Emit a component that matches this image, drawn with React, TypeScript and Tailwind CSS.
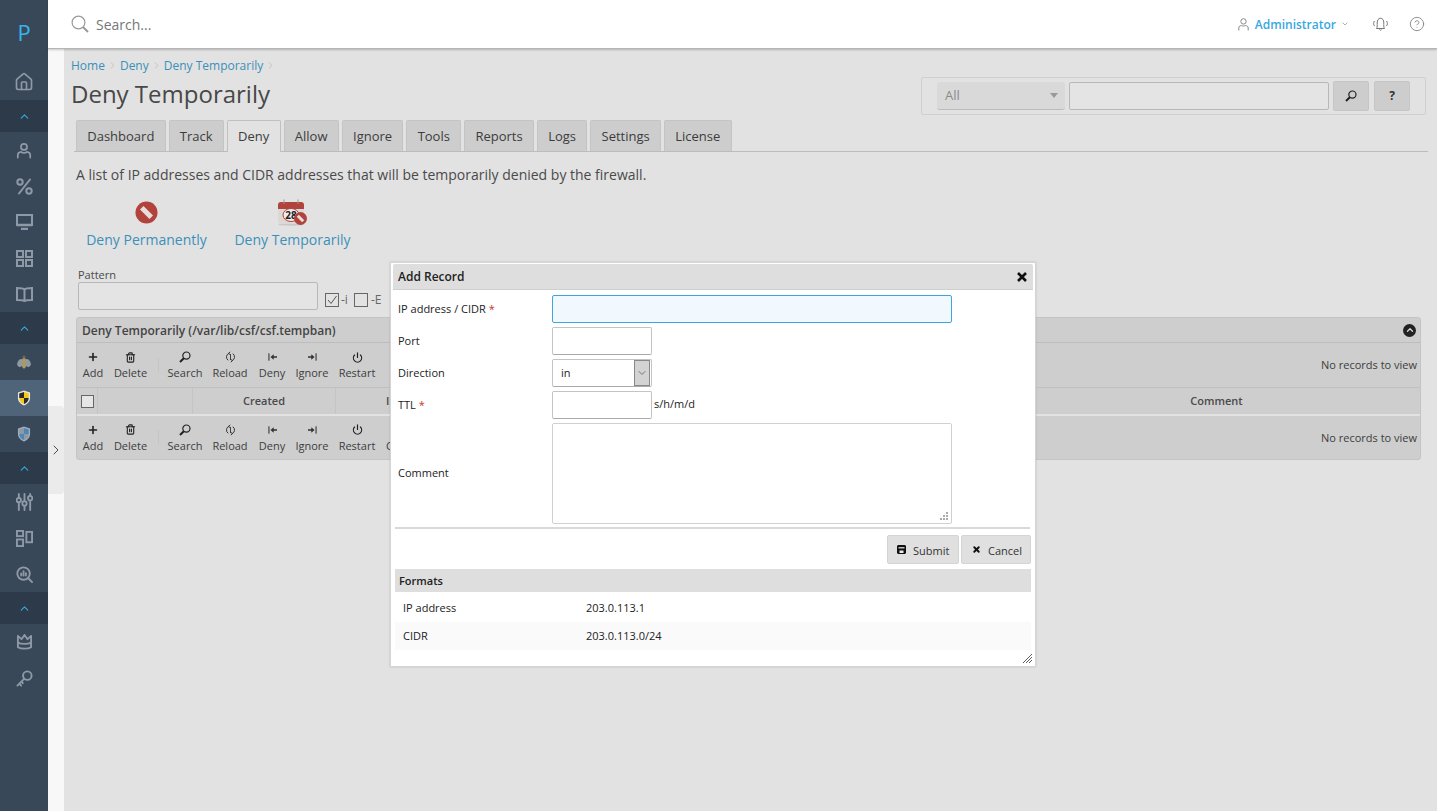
import React from "react";
import { ChevronUp, ChevronDown, ChevronRight, Home, Power, Plus, Trash2, X, HelpCircle } from "lucide-react";

const S = { stroke: "#8e99a6", fill: "none", strokeWidth: 2, strokeLinecap: "round" as const, strokeLinejoin: "round" as const };

function NavIcon({ children }: { children: React.ReactNode }) {
  return <div className="h-9 flex items-center justify-center">{children}</div>;
}
function Collapse() {
  return (
    <div className="h-8 bg-[#2d3a4a] flex items-center justify-center">
      <ChevronUp size={13} color="#36a9d8" strokeWidth={2} />
    </div>
  );
}
function Shield({ a, b, c }: { a: string; b: string; c: string }) {
  return (
    <svg width="14" height="16" viewBox="0 0 15 17">
      <path d="M7.5 0.5 L14 2.5 V8.5 C14 12.5 11 15 7.5 16.5 C4 15 1 12.5 1 8.5 V2.5Z" fill={c} />
      <path d="M7.5 2 L12.6 3.6 V8.5 H7.5Z" fill={a} />
      <path d="M7.5 2 L2.4 3.6 V8.5 H7.5Z" fill={b} />
      <path d="M7.5 15 C10 14 12.4 12 12.6 8.5 H7.5Z" fill={b} />
      <path d="M7.5 15 C5 14 2.6 12 2.4 8.5 H7.5Z" fill={a} />
    </svg>
  );
}

function Sidebar() {
  const c = "#8e99a6";
  return (
    <aside className="w-12 shrink-0 bg-[#394859] flex flex-col">
      <div className="h-16 flex items-center justify-center text-[22px] text-[#36b4ee] font-normal">P</div>
      <NavIcon><Home size={20} color={c} strokeWidth={2} /></NavIcon>
      <Collapse />
      <NavIcon>
        <svg width="16" height="17" viewBox="0 0 18 18" {...S}><circle cx="9" cy="5" r="3.4" /><path d="M2 17 V14.5 C2 12 4 10.8 6 10.6 C7 12 11 12 12 10.6 C14 10.8 16 12 16 14.5 V17" /></svg>
      </NavIcon>
      <NavIcon>
        <svg width="17" height="17" viewBox="0 0 17 17" {...S}><path d="M14 1.5L3 15.5" /><circle cx="4" cy="4" r="2.7" /><circle cx="13" cy="13" r="2.7" /></svg>
      </NavIcon>
      <NavIcon>
        <svg width="17" height="16" viewBox="0 0 17 16" {...S} strokeLinecap="butt" strokeLinejoin="miter"><rect x="1" y="1" width="15" height="10" /><path d="M1 11H16M5 15H12" strokeWidth="2.4" /></svg>
      </NavIcon>
      <NavIcon>
        <svg width="17" height="17" viewBox="0 0 17 17" {...S} strokeLinecap="butt" strokeLinejoin="miter"><rect x="1" y="1" width="6" height="6" /><rect x="10" y="1" width="6" height="6" /><rect x="1" y="10" width="6" height="6" /><rect x="10" y="10" width="6" height="6" /></svg>
      </NavIcon>
      <NavIcon>
        <svg width="17" height="15" viewBox="0 0 17 15" {...S} strokeLinecap="butt" strokeLinejoin="miter"><path d="M8.5 2.5C7 1 3 1 1 1V13C3 13 7 13 8.5 14.2C10 13 14 13 16 13V1C14 1 10 1 8.5 2.5ZM8.5 2.5V14" /></svg>
      </NavIcon>
      <Collapse />
      <NavIcon>
        <svg width="14" height="14" viewBox="0 0 14 14"><ellipse cx="3.5" cy="8" rx="3" ry="4" fill="#8e99a6" transform="rotate(25 3.5 8)" /><ellipse cx="10.5" cy="8" rx="3" ry="4" fill="#8e99a6" transform="rotate(-25 10.5 8)" /><ellipse cx="7" cy="8" rx="2.5" ry="5.5" fill="#a69a6a" /><circle cx="7" cy="2" r="1.6" fill="#6f6a55" /></svg>
      </NavIcon>
      <div className="h-9 bg-[#4f6478] flex items-center justify-center"><Shield a="#f6c90e" b="#2a2a2a" c="#e6e6e6" /></div>
      <NavIcon><Shield a="#4f86b8" b="#8d99a5" c="#a3adb8" /></NavIcon>
      <Collapse />
      <NavIcon>
        <svg width="17" height="18" viewBox="0 0 18 19" {...S}><path d="M3 1V5M3 10V18M9 1V8M9 14V18M15 1V3M15 9V18" /><circle cx="3" cy="7.5" r="2.3" /><circle cx="9" cy="11" r="2.3" /><circle cx="15" cy="5.5" r="2.3" /></svg>
      </NavIcon>
      <NavIcon>
        <svg width="17" height="17" viewBox="0 0 18 18" {...S} strokeLinecap="butt" strokeLinejoin="miter"><rect x="1" y="1" width="6.5" height="5.5" /><rect x="1" y="10" width="6.5" height="7" /><rect x="11" y="2" width="6" height="11" /></svg>
      </NavIcon>
      <NavIcon>
        <svg width="17" height="17" viewBox="0 0 18 18" {...S}><circle cx="8" cy="8" r="6.6" /><path d="M13 13L17 17M5.5 10V8M8 10V5.5M10.5 10V7.5" /></svg>
      </NavIcon>
      <Collapse />
      <NavIcon>
        <svg width="17" height="16" viewBox="0 0 18 17" {...S}><path d="M2 10 V2 L5.8 5.5 L9 1 L12.2 5.5 L16 2 V10" /><path d="M2 9 C5 11 13 11 16 9 V14 C13 16 5 16 2 14Z" /></svg>
      </NavIcon>
      <NavIcon>
        <svg width="17" height="17" viewBox="0 0 18 18" {...S}><circle cx="12" cy="6" r="4.5" /><path d="M8.8 9.2L1.5 16.5M3.5 14.5L5.5 16.5M5.7 12.3L7.3 13.9" /></svg>
      </NavIcon>
    </aside>
  );
}

function TopBar() {
  return (
    <header className="h-[49px] shrink-0 bg-white border-b border-b-[#b5b5b5] shadow-[0_1px_2px_rgba(0,0,0,0.2)] flex items-center pl-[23px] pr-[12px] z-10">
      <svg width="18" height="18" viewBox="0 0 18 18" fill="none" stroke="#9a9a9a" strokeWidth="1.2"><circle cx="7.5" cy="7.5" r="6.4" /><path d="M12 12L17 17" strokeWidth="2" /></svg>
      <span className="ml-[7px] text-[14px] text-[#777]">Search...</span>
      <div className="ml-auto flex items-center">
        <svg width="11" height="13" viewBox="0 0 11 13" fill="none" stroke="#888" strokeWidth="1"><circle cx="5.5" cy="3.4" r="2.7" /><path d="M0.8 12.5V10C0.8 8.4 2 7.6 3.4 7.5C4.2 8.2 6.8 8.2 7.6 7.5C9 7.6 10.2 8.4 10.2 10V12.5" /></svg>
        <span className="ml-[6px] mt-[1px] text-[12px] font-semibold text-[#36a9df]">Administrator</span>
        <ChevronDown size={8} color="#888" strokeWidth={2} className="ml-[5px]" />
        <svg className="ml-[23px]" width="17" height="15" viewBox="0 0 17 15" fill="none" stroke="#777" strokeWidth="1"><path d="M4.5 11.5C5.5 10 5.2 8 5.2 6C5.2 3 6.5 1.2 8.5 1.2C10.5 1.2 11.8 3 11.8 6C11.8 8 11.5 10 12.5 11.5Z" /><path d="M7.5 12.5C8 13.5 9 13.5 9.5 12.5M2.5 4C1.3 5.5 1.3 7.5 2.5 9M14.5 4C15.7 5.5 15.7 7.5 14.5 9" /></svg>
        <HelpCircle className="ml-[20px]" size={16} color="#777" strokeWidth={1.2} />
      </div>
    </header>
  );
}

const tabs = ["Dashboard", "Track", "Deny", "Allow", "Ignore", "Tools", "Reports", "Logs", "Settings", "License"];

function ReloadIcon() {
  return (
    <svg width="11" height="12" viewBox="0 0 11 12" fill="none" stroke="#333" strokeWidth="1"><path d="M4 2.3A4 4 0 0 0 3.2 9.3M7 9.7A4 4 0 0 0 7.8 2.7" /><path d="M5.5 3V9" strokeWidth="0.9" /><path d="M5.2 0.8L3.6 2.4L5.2 3.6M5.8 11.2L7.4 9.6L5.8 8.4" /></svg>
  );
}
function Bar({ dir }: { dir: "l" | "r" }) {
  return dir === "l" ? (
    <svg width="9" height="8" viewBox="0 0 11 9" fill="#333"><rect x="0.5" y="0" width="1.3" height="9" /><path d="M3 4.5L7 1V3.7H11V5.3H7V8Z" /></svg>
  ) : (
    <svg width="9" height="8" viewBox="0 0 11 9" fill="#333"><rect x="9.2" y="0" width="1.3" height="9" /><path d="M8 4.5L4 1V3.7H0V5.3H4V8Z" /></svg>
  );
}
function FlippedSearch() {
  return (
    <svg width="12" height="12" viewBox="0 0 12 12" fill="none" stroke="#222">
      <circle cx="7.4" cy="4.6" r="3.6" strokeWidth="1.2" />
      <path d="M4.8 7.2L1 11" strokeWidth="2" />
    </svg>
  );
}

function ToolBtn({ icon, label, w }: { icon: React.ReactNode; label: string; w: string }) {
  return (
    <div className={`${w} flex flex-col items-center shrink-0`}>
      <div className="h-4 flex items-center justify-center">{icon}</div>
      <span className="text-[11px] leading-[15px] text-[#3d3d3d] whitespace-nowrap">{label}</span>
    </div>
  );
}

function Toolbar({ extra, h }: { extra?: boolean; h: string }) {
  return (
    <div className={`${h} flex items-center relative pl-[1px] pb-[1px]`}>
      <ToolBtn w="w-[30px]" label="Add" icon={<Plus size={12} color="#222" strokeWidth={3.2} />} />
      <ToolBtn w="w-[43px] ml-[1px]" label="Delete" icon={<Trash2 size={11} color="#222" strokeWidth={2.4} />} />
      <div className="w-px h-[14px] bg-[#c4c4c4] ml-[6px] mr-[3px]" />
      <ToolBtn w="w-[46px]" label="Search" icon={<FlippedSearch />} />
      <ToolBtn w="w-[44px]" label="Reload" icon={<ReloadIcon />} />
      <ToolBtn w="w-[38px] ml-[1px]" label="Deny" icon={<Bar dir="l" />} />
      <ToolBtn w="w-[44px] ml-[-1px]" label="Ignore" icon={<Bar dir="r" />} />
      <ToolBtn w="w-[46px]" label="Restart" icon={<Power size={11} color="#222" strokeWidth={2.6} />} />
      {extra && <span className="ml-[6px] mt-[16px] text-[11px] leading-[15px] text-[#3d3d3d]">Clear</span>}
      <span className="ml-auto mr-[3px] mt-[2px] text-[11px] text-[#3d3d3d]">No records to view</span>
    </div>
  );
}

function Grid() {
  return (
    <section className="ml-[12px] mr-[16px] mt-[7px] bg-[#cecece] border border-[#c4c4c4] rounded-[3px]">
      <div className="h-[25px] flex items-center pl-[5px] pr-[4px] border-b border-b-[#bdbdbd] text-[12px] font-semibold text-[#444]">
        <span className="mt-[1px]">Deny Temporarily (/var/lib/csf/csf.tempban)</span>
        <span className="ml-auto w-[13px] h-[13px] rounded-full bg-[#222] flex items-center justify-center">
          <ChevronUp size={10} color="#ddd" strokeWidth={3} />
        </span>
      </div>
      <Toolbar h="h-[44px]" />
      <div className="h-[29px] flex border-t border-t-[#c0c0c0] border-b-2 border-b-[#e2e2e2] text-[11px] font-semibold text-[#4a4a4a]">
        <div className="w-[21px] flex items-center justify-center border-r border-r-[#c4c4c4]">
          <span className="w-[13px] h-[13px] border border-[#666] bg-[#e6e6e6]" />
        </div>
        <div className="w-[95px] border-r border-r-[#c4c4c4]" />
        <div className="w-[143px] flex items-center justify-center border-r border-r-[#c4c4c4]">Created</div>
        <div className="w-[168px] flex items-center pl-[50px] border-r border-r-[#c4c4c4]">IP</div>
        <div className="flex-1 border-r border-r-[#c4c4c4]" />
        <div className="w-[407px] flex items-center justify-center">Comment</div>
      </div>
      <Toolbar extra h="h-[43px]" />
    </section>
  );
}

function NoEntry({ size }: { size: number }) {
  return (
    <svg width={size} height={size} viewBox="0 0 24 24">
      <circle cx="12" cy="12" r="11.5" fill="#b2423c" />
      <rect x="5" y="9.4" width="14" height="5.2" fill="#e6dedb" transform="rotate(45 12 12)" />
    </svg>
  );
}

function CalendarDeny() {
  return (
    <svg width="31" height="27" viewBox="0 0 31 27">
      <ellipse cx="14" cy="25.5" rx="13" ry="1.2" fill="#c8c8c8" />
      <rect x="1" y="3" width="26" height="22" rx="3" fill="#dcd8d6" />
      <path d="M1 10V6a3 3 0 0 1 3-3H24a3 3 0 0 1 3 3V10Z" fill="#b2423c" />
      <path d="M7 0.5V5M21 0.5V5" stroke="#999" strokeWidth="1" />
      <ellipse cx="14" cy="16" rx="8" ry="6.5" fill="#eee" stroke="#b2423c" strokeWidth="1" />
      <text x="14" y="19.5" textAnchor="middle" fontSize="10" fontWeight="700" fill="#222" fontFamily="'Open Sans',sans-serif">28</text>
      <circle cx="23.5" cy="19.5" r="6.5" fill="#b2423c" />
      <rect x="19.7" y="18" width="7.6" height="3" fill="#e6dedb" transform="rotate(45 23.5 19.5)" />
    </svg>
  );
}

function Page() {
  return (
    <main className="flex-1 bg-[#e2e2e2] relative">
      <div className="flex items-start justify-between pl-[7px] pr-[11px]">
        <div>
          <div className="mt-[8px] flex items-center text-[12px] leading-[17px] text-[#3b90b9]">
            <span>Home</span>
            <ChevronRight size={11} color="#b5b5b5" strokeWidth={1.5} className="mx-[2px]" />
            <span>Deny</span>
            <ChevronRight size={11} color="#b5b5b5" strokeWidth={1.5} className="mx-[2px]" />
            <span>Deny Temporarily</span>
            <ChevronRight size={11} color="#b5b5b5" strokeWidth={1.5} className="mx-[2px]" />
          </div>
          <h1 className="mt-[3px] text-[24px] leading-[34px] text-[#484848]">Deny Temporarily</h1>
        </div>
        <div className="mt-[28px] w-[505px] h-[38px] border border-[#d0d0d0] rounded-[2px] flex items-center pl-[15px]">
          <div className="w-[128px] h-[28px] bg-[#d9d9d9] rounded-[3px] border-b border-b-[#bbb] flex items-center justify-between pl-[8px] pr-[7px] text-[13px] text-[#8a8a8a]">
            All
            <span className="w-0 h-0 border-x-[4px] border-x-transparent border-t-[5px] border-t-[#999]" />
          </div>
          <div className="ml-[4px] w-[260px] h-[28px] bg-[#e4e4e4] border border-[#b8b8b8] rounded-[2px]" />
          <div className="ml-[4px] w-[36px] h-[30px] bg-[#cdcdcd] border border-[#c6c6c6] rounded-[2px] flex items-center justify-center"><FlippedSearch /></div>
          <div className="ml-[5px] w-[36px] h-[30px] bg-[#cdcdcd] border border-[#c6c6c6] rounded-[2px] flex items-center justify-center text-[12px] font-bold text-[#333]">?</div>
        </div>
      </div>
      <nav className="mt-[5px] ml-[10px] mr-[9px] h-[32px] flex gap-[3px] pl-[2px] border-b border-b-[#bcbcbc]">
        {tabs.map((t) => (
          <div
            key={t}
            className={
              t === "Deny"
                ? "h-[32px] px-[10.25px] pt-[1px] flex items-center text-[13px] text-[#3c3c3c] bg-[#e2e2e2] border border-[#c0c0c0] border-b-0 rounded-t-[2px] z-10"
                : "h-[31px] px-[10.25px] pt-[2px] flex items-center text-[13px] text-[#3c3c3c] bg-[#cdcdcd] border border-[#c4c4c4] border-b-0 rounded-t-[2px]"
            }
          >
            {t}
          </div>
        ))}
      </nav>
      <p className="mt-[13px] ml-[12px] text-[14px] leading-[19px] text-[#4a4a4a]">A list of IP addresses and CIDR addresses that will be temporarily denied by the firewall.</p>
      <div className="mt-[15px] ml-[22px] flex gap-[27px]">
        <div className="flex flex-col items-center w-[121px]">
          <div className="h-[27px] flex items-center justify-center"><NoEntry size={23} /></div>
          <span className="mt-[4px] text-[14px] leading-[19px] text-[#3b90b9] whitespace-nowrap">Deny Permanently</span>
        </div>
        <div className="flex flex-col items-center w-[117px]">
          <div className="h-[27px] flex items-center justify-center"><CalendarDeny /></div>
          <span className="mt-[4px] text-[14px] leading-[19px] text-[#3b90b9] whitespace-nowrap">Deny Temporarily</span>
        </div>
      </div>
      <div className="mt-[19px] ml-[14px] flex items-end">
        <div>
          <div className="text-[11px] leading-[14px] text-[#4a4a4a]">Pattern</div>
          <div className="w-[240px] h-[28px] bg-[#e4e4e4] border border-[#b8b8b8] rounded-[2px]" />
        </div>
        <div className="ml-[7px] mb-[1px] flex items-center text-[12px] text-[#666]">
          <span className="w-[14px] h-[14px] border border-[#666] flex items-center justify-center">
            <svg width="10" height="10" viewBox="0 0 10 10" fill="none" stroke="#555" strokeWidth="1"><path d="M1 5L4 8.5L9.5 1" /></svg>
          </span>
          <span className="ml-[2px]">-i</span>
          <span className="ml-[6px] w-[14px] h-[14px] border border-[#666]" />
          <span className="ml-[3px]">-E</span>
        </div>
      </div>
      <Grid />
      <Modal />
    </main>
  );
}

function Field({ label, req, children }: { label: string; req?: boolean; children: React.ReactNode }) {
  return (
    <div className="flex items-center mb-[4px]">
      <div className="w-[159px] pl-[5px] text-[11px] text-[#222]">
        {label}
        {req && <span className="text-[#c0392b]"> *</span>}
      </div>
      {children}
    </div>
  );
}

const inputCls = "h-[28px] bg-white border border-[#c4c4c4] border-b-[#aaa] rounded-[2px]";

function Modal() {
  return (
    <div className="absolute left-[326px] top-[213px] w-[646px] h-[405px] bg-white border border-[#d4d4d4] shadow-[0_0_2px_rgba(0,0,0,0.15)] px-[2px] pt-[1px] flex flex-col">
      <div className="h-[26px] shrink-0 bg-[#dedede] border-b border-b-[#cfcfcf] rounded-t-[2px] flex items-center justify-between pl-[5px] pr-[6px] text-[12px] font-semibold text-[#222]">
        Add Record
        <svg width="10" height="10" viewBox="0 0 10 10" stroke="#111" strokeWidth="2.6"><path d="M1 1L9 9M9 1L1 9" /></svg>
      </div>
      <div className="pt-[5px]">
        <Field label="IP address / CIDR" req>
          <div className="w-[400px] h-[28px] bg-[#f1f9fe] border border-[#3ba7de] rounded-[2px]" />
        </Field>
        <Field label="Port"><div className={`${inputCls} w-[100px]`} /></Field>
        <Field label="Direction">
          <div className={`${inputCls} w-[100px] flex items-center pl-[8px] text-[11px] text-[#222] relative`}>
            in
            <span className="absolute right-[1px] top-0 bottom-0 w-[16px] bg-[#d3d3d3] border border-[#888] flex items-center justify-center">
              <ChevronDown size={12} color="#555" strokeWidth={1.5} />
            </span>
          </div>
        </Field>
        <Field label="TTL" req>
          <div className={`${inputCls} w-[100px]`} />
          <span className="ml-[2px] -mt-[1px] text-[11px] text-[#222]">s/h/m/d</span>
        </Field>
        <Field label="Comment">
          <div className="w-[400px] h-[101px] bg-white border border-[#d0d0d0] rounded-[2px] relative">
            <svg className="absolute right-[2px] bottom-[2px]" width="9" height="9" viewBox="0 0 9 9" fill="#aaa">
              <rect x="6" y="0" width="2" height="2" /><rect x="3" y="3" width="2" height="2" /><rect x="6" y="3" width="2" height="2" /><rect x="0" y="6" width="2" height="2" /><rect x="3" y="6" width="2" height="2" /><rect x="6" y="6" width="2" height="2" />
            </svg>
          </div>
        </Field>
      </div>
      <div className="h-[2px] shrink-0 bg-[#d9d9d9] ml-[2px] mr-[3px] -mt-[1px]" />
      <div className="mt-[6px] flex justify-end gap-[2px] pr-[2px]">
        <div className="w-[72px] h-[29px] bg-[#e0e0e0] border border-[#d4d4d4] rounded-[2px] flex items-center pl-[9px] text-[11px] text-[#333]">
          <svg width="9" height="9" viewBox="0 0 9 9" fill="#111"><path d="M1 0H8L9 1V8L8 9H1L0 8V1Z" /><rect x="1.5" y="2.2" width="6" height="1.2" fill="#eee" /><rect x="2.5" y="5.5" width="4" height="2.5" fill="#eee" /></svg>
          <span className="ml-[7px] mt-[3px]">Submit</span>
        </div>
        <div className="w-[70px] h-[29px] bg-[#e0e0e0] border border-[#d4d4d4] rounded-[2px] flex items-center pl-[10px] text-[11px] text-[#333]">
          <X size={9} color="#111" strokeWidth={5} />
          <span className="ml-[7px] mt-[3px]">Cancel</span>
        </div>
      </div>
      <div className="mt-[5px] ml-[2px] mr-[2px] h-[23px] bg-[#dedede] flex items-center pl-[4px] pt-[1px] text-[11px] font-semibold text-[#222] shrink-0">Formats</div>
      <div className="ml-[2px] mr-[2px] mt-[2px] text-[11px] text-[#222]">
        <div className="h-[28px] flex items-center"><span className="w-[191px] pl-[8px]">IP address</span><span>203.0.113.1</span></div>
        <div className="h-[28px] flex items-center bg-[#fafafa]"><span className="w-[191px] pl-[8px]">CIDR</span><span>203.0.113.0/24</span></div>
      </div>
      <svg className="absolute right-[3px] bottom-[3px]" width="9" height="9" viewBox="0 0 9 9" stroke="#333" strokeWidth="0.8"><path d="M0 9L9 0M3 9L9 3M6 9L9 6" /></svg>
    </div>
  );
}

export default function App() {
  return (
    <div className="h-[811px] flex overflow-hidden bg-[#e2e2e2] font-['Open_Sans',sans-serif]">
      <Sidebar />
      <div className="flex-1 flex flex-col min-w-0">
        <TopBar />
        <div className="flex-1 flex min-h-0">
          <div className="w-4 shrink-0 bg-[#f8f8f8] relative">
            <div className="absolute top-[357px] left-0 w-4 h-[88px] bg-[#ebebeb] rounded-r-[4px] flex items-center justify-center">
              <ChevronRight size={18} color="#333" strokeWidth={1.3} />
            </div>
          </div>
          <Page />
        </div>
      </div>
    </div>
  );
}
